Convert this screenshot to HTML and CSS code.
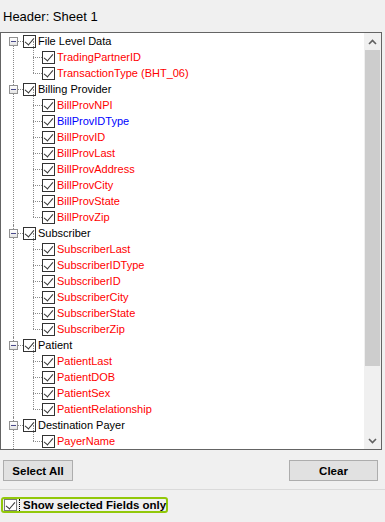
FILE: index.html
```html
<!DOCTYPE html>
<html lang="en">

<head>
  <meta charset="UTF-8" />
  <title>Header: Sheet 1</title>
  <link rel="stylesheet" href="styles.css">
</head>

<body>

  <div class="title">Header: Sheet 1</div>

  <div class="tree-box">
    <div class="tree" id="tree"></div>
    <div class="scrollbar">
      <div class="arrow">
        <svg width="9" height="6" viewBox="0 0 9 6"><path d="M1 5 L4.5 1.5 L8 5" fill="none" stroke="#606060" stroke-width="1.6"/></svg>
      </div>
      <div class="track">
        <div class="thumb"></div>
      </div>
      <div class="arrow">
        <svg width="9" height="6" viewBox="0 0 9 6"><path d="M1 1 L4.5 4.5 L8 1" fill="none" stroke="#606060" stroke-width="1.6"/></svg>
      </div>
    </div>
  </div>

  <div class="button-row">
    <button class="win-button select-all">Select All</button>
    <button class="win-button clear">Clear</button>
  </div>

  <div class="separator"></div>

  <div class="show-selected">
    <span class="check small"></span>
    <span class="focus-label">Show selected Fields only</span>
  </div>

  <script>
    const groups = [
      { name: 'File Level Data', fields: [['TradingPartnerID', 'red'], ['TransactionType (BHT_06)', 'red']] },
      { name: 'Billing Provider', fields: [['BillProvNPI', 'red'], ['BillProvIDType', 'blue'], ['BillProvID', 'red'], ['BillProvLast', 'red'], ['BillProvAddress', 'red'], ['BillProvCity', 'red'], ['BillProvState', 'red'], ['BillProvZip', 'red']] },
      { name: 'Subscriber', fields: [['SubscriberLast', 'red'], ['SubscriberIDType', 'red'], ['SubscriberID', 'red'], ['SubscriberCity', 'red'], ['SubscriberState', 'red'], ['SubscriberZip', 'red']] },
      { name: 'Patient', fields: [['PatientLast', 'red'], ['PatientDOB', 'red'], ['PatientSex', 'red'], ['PatientRelationship', 'red']] },
      { name: 'Destination Payer', fields: [['PayerName', 'red']] }
    ];

    const tree = document.getElementById('tree');

    groups.forEach(group => {
      const node = document.createElement('div');
      node.className = 'group';
      node.innerHTML =
        '<div class="row parent"><span class="expander"></span><span class="hline"></span>' +
        '<span class="check"></span><span class="label">' + group.name + '</span></div>';

      const children = document.createElement('div');
      children.className = 'children';
      group.fields.forEach(([name, color]) => {
        const row = document.createElement('div');
        row.className = 'row child';
        row.innerHTML = '<span class="hline"></span><span class="check"></span>' +
          '<span class="label ' + color + '">' + name + '</span>';
        children.appendChild(row);
      });

      node.appendChild(children);
      tree.appendChild(node);
    });
  </script>

</body>

</html>
```

FILE: styles.css
```css
* {
  box-sizing: border-box;
}

body {
  margin: 0;
  width: 385px;
  height: 522px;
  background: #f0f0f0;
  font-family: 'Liberation Sans', Arial, sans-serif;
  font-size: 11px;
  color: #000;
  overflow: hidden;
}

.title {
  height: 32px;
  padding: 9px 0 0 3px;
  font-size: 13px;
}

.tree-box {
  display: flex;
  width: 382px;
  height: 418px;
  border: 1px solid #646464;
  background: #fff;
}

.tree {
  flex: 1;
  overflow: hidden;
  font-size: 11px;
}

.group {
  position: relative;
}

/* vertical dotted line through the root items */
.tree .group::before {
  content: '';
  position: absolute;
  left: 12px;
  top: 0;
  bottom: 0;
  border-left: 1px dotted #8a8a8a;
}

.tree .group:first-child::before {
  top: 8px;
}

.row {
  display: flex;
  align-items: center;
  height: 16px;
  position: relative;
}

.parent {
  padding-left: 8px;
}

.child {
  padding-left: 32px;
}

.children {
  position: relative;
}

.children::before {
  content: '';
  position: absolute;
  left: 32px;
  top: -8px;
  bottom: 8px;
  border-left: 1px dotted #8a8a8a;
}

.expander {
  position: relative;
  z-index: 1;
  width: 9px;
  height: 9px;
  border: 1px solid #919191;
  background: linear-gradient(#fff, #e4e4e4);
}

.expander::after {
  content: '';
  position: absolute;
  left: 1px;
  top: 3px;
  width: 5px;
  height: 1px;
  background: #4a4a8a;
}

.hline {
  width: 5px;
  border-top: 1px dotted #8a8a8a;
}

.child .hline {
  width: 9px;
}

.check {
  position: relative;
  width: 13px;
  height: 13px;
  border: 1px solid #333;
  background: #fff;
  flex-shrink: 0;
}

.check::after {
  content: '';
  position: absolute;
  left: 3px;
  top: 0px;
  width: 4px;
  height: 8px;
  border-right: 1.5px solid #333;
  border-bottom: 1.5px solid #333;
  transform: rotate(40deg);
}

.label {
  padding-left: 2px;
  white-space: nowrap;
}

.red {
  color: #ff0000;
}

.blue {
  color: #0000ff;
}

.scrollbar {
  width: 17px;
  display: flex;
  flex-direction: column;
  background: #f0f0f0;
}

.arrow {
  height: 17px;
  display: flex;
  justify-content: center;
  align-items: center;
}

.track {
  flex: 1;
  padding: 0 1px;
}

.thumb {
  height: 316px;
  background: #cdcdcd;
}

.button-row {
  display: flex;
  justify-content: space-between;
  padding: 10px 7px 0 3px;
}

.win-button {
  height: 21px;
  border: 1px solid #adadad;
  background: #e1e1e1;
  font-family: 'Liberation Sans', Arial, sans-serif;
  font-size: 11.5px;
  font-weight: bold;
  color: #000;
  padding: 0;
}

.select-all {
  width: 70px;
}

.clear {
  width: 89px;
}

.separator {
  margin-top: 8px;
  border-top: 1px solid #dadada;
}

.show-selected {
  display: flex;
  align-items: center;
  width: 167px;
  height: 16px;
  margin: 7px 0 0 1px;
  border: 2px solid #92c80a;
  border-radius: 3px;
  font-size: 11.5px;
  font-weight: bold;
}

.check.small {
  width: 13px;
  height: 12px;
  margin-left: 1px;
  border-color: #7a7a7a;
}

.focus-label {
  margin-left: 2px;
  padding-left: 3px;
  border-left: 1px dotted #000;
  white-space: nowrap;
}
```
